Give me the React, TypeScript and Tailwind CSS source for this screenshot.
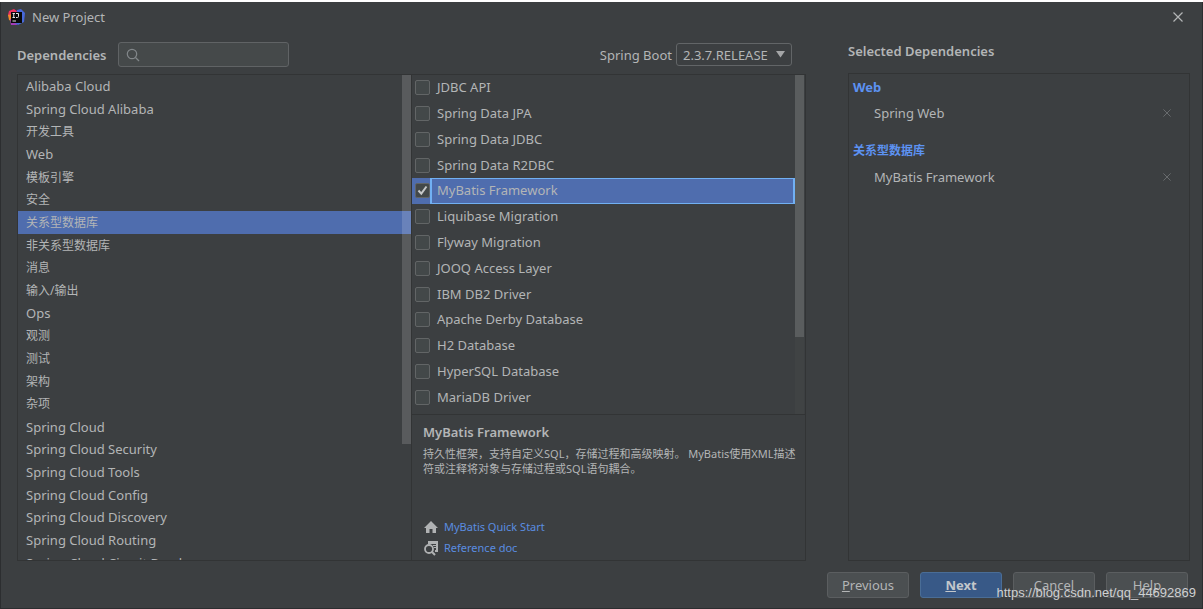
import { useState } from "react";

const categories = [
  "Alibaba Cloud",
  "Spring Cloud Alibaba",
  "开发工具",
  "Web",
  "模板引擎",
  "安全",
  "关系型数据库",
  "非关系型数据库",
  "消息",
  "输入/输出",
  "Ops",
  "观测",
  "测试",
  "架构",
  "杂项",
  "Spring Cloud",
  "Spring Cloud Security",
  "Spring Cloud Tools",
  "Spring Cloud Config",
  "Spring Cloud Discovery",
  "Spring Cloud Routing",
  "Spring Cloud Circuit Breaker",
];

const drivers = [
  "JDBC API",
  "Spring Data JPA",
  "Spring Data JDBC",
  "Spring Data R2DBC",
  "MyBatis Framework",
  "Liquibase Migration",
  "Flyway Migration",
  "JOOQ Access Layer",
  "IBM DB2 Driver",
  "Apache Derby Database",
  "H2 Database",
  "HyperSQL Database",
  "MariaDB Driver",
];

const selected = [
  { group: "Web", items: ["Spring Web"] },
  { group: "关系型数据库", items: ["MyBatis Framework"] },
];

const isChinese = (text: string) => /[\u4e00-\u9fff]/.test(text);

function Logo() {
  return (
    <svg width="18" height="17" viewBox="0 0 18 17" aria-hidden="true">
      <path d="M1 2 L6 0 L10 3 L6 12 L0 6 Z" fill="#f0315f" />
      <path d="M0 6 L4 5 L5 13 L1 11 Z" fill="#f48a2a" />
      <path d="M2 10 L8 11 L9 16 L3 16 Z" fill="#a23bb8" />
      <path d="M9 1 L13 0 L17 4 L16 13 L10 16 L7 14 Z" fill="#4768d8" />
      <rect x="3" y="3" width="11" height="11" fill="#080808" />
      <path d="M4.5 4.5 H7 M5.75 4.5 V8.5 M4.5 8.5 H7 M8 4.5 H10.5 V7.5 Q10.5 8.5 9.5 8.5 H8 M4.5 12 H8" fill="none" stroke="#e4e4e4" />
    </svg>
  );
}

function Cross({ size }: { size: number }) {
  return (
    <svg width={size} height={size} viewBox="0 0 10 10" fill="none" stroke="currentColor" strokeWidth="1.2" aria-hidden="true">
      <path d="M0.5 0.5 L9.5 9.5 M9.5 0.5 L0.5 9.5" />
    </svg>
  );
}

function DriverRow({ name, active }: { name: string; active: boolean }) {
  const [checked, setChecked] = useState(active);
  return (
    <li className={active ? "bg-[#4f6dae]" : ""}>
      <label className="flex h-full items-center">
        <span className="grid w-[18px] shrink-0 place-items-center pl-[3px]">
          <input
            type="checkbox"
            checked={checked}
            onChange={() => setChecked(!checked)}
            className="col-start-1 row-start-1 size-[15px] appearance-none rounded-[2px] border border-[#626566] bg-[#434849]"
          />
          {checked && (
            <svg width="11" height="11" viewBox="0 0 11 11" className="pointer-events-none col-start-1 row-start-1" fill="none" stroke="#c6c8c9" strokeWidth="2" aria-hidden="true">
              <path d="M1.5 5.5 L4.3 8.7 L9.5 1.5" />
            </svg>
          )}
        </span>
        <span className={`flex h-full flex-1 items-center border border-x-2 pb-px pl-[5px] ${active ? "border-[#71b0f3]" : "border-transparent"}`}>{name}</span>
      </label>
    </li>
  );
}

const buttonClass = "h-[26px] w-[82px] rounded-[3px] border border-[#5b5e60] bg-[#4b4f51]";

export default function App() {
  return (
    <div className="flex h-screen flex-col border-t-2 border-white bg-[#3c3f41] font-['Noto_Sans','Noto_Sans_CJK_SC',sans-serif] text-[13px] leading-5 text-[#b3b5b6]">
      <div className="flex min-h-0 flex-1 flex-col border border-t-0 border-[#2c2e30]">
        <header className="flex h-[30px] shrink-0 items-center pr-[19px] pl-[7px]">
          <Logo />
          <h1 className="ml-[6px] flex-1">New Project</h1>
          <button type="button" aria-label="Close">
            <Cross size={10} />
          </button>
        </header>

        <main className="flex min-h-0 flex-1 gap-[42px] pr-3 pl-4">
          <section className="flex min-w-0 flex-[789] flex-col">
            <div className="flex h-[42px] shrink-0 items-center pt-[3px] pr-[14px]">
              <label htmlFor="search" className="font-semibold">Dependencies</label>
              <div className="ml-3 flex h-[25px] w-[171px] items-center rounded-[3px] border border-[#606365] bg-[#45494a] px-[7px]">
                <svg width="14" height="14" viewBox="0 0 14 14" fill="none" stroke="#82878a" strokeWidth="1.2" aria-hidden="true">
                  <circle cx="6" cy="6" r="4.7" />
                  <path d="M9.5 9.5 L13 13" />
                </svg>
                <input id="search" type="text" className="min-w-0 flex-1 bg-transparent pl-1 outline-none" />
              </div>
              <label htmlFor="boot" className="ml-auto">Spring Boot</label>
              <div className="ml-1 grid h-[23px] w-[116px] items-center rounded-[3px] border border-[#626567]">
                <select id="boot" className="col-start-1 row-start-1 appearance-none bg-transparent pl-[6px] outline-none">
                  <option>2.3.7.RELEASE</option>
                </select>
                <svg width="9" height="7" viewBox="0 0 9 7" className="pointer-events-none col-start-1 row-start-1 mr-[6px] justify-self-end" fill="#a4a6a7" aria-hidden="true">
                  <path d="M0 0 H9 L4.5 6.5 Z" />
                </svg>
              </div>
            </div>

            <div className="flex min-h-0 flex-1 border border-[#323435]">
              <div className="grid min-w-0 flex-1 grid-cols-[1fr_9px] grid-rows-[minmax(0,1fr)] overflow-hidden">
                <ul className="col-span-2 col-start-1 row-start-1 grid h-[499px] auto-rows-fr">
                  {categories.map((name) => (
                    <li key={name} className={name === "关系型数据库" ? "bg-[#4f6dae]" : ""}>
                      <button type="button" className={`flex h-full w-full items-center pl-2 ${isChinese(name) ? "pt-px text-xs" : ""}`}>{name}</button>
                    </li>
                  ))}
                </ul>
                <div className="col-start-2 row-start-1 h-[76%] bg-white/15" />
              </div>

              <div className="flex min-w-0 flex-1 flex-col border-l border-[#323435]">
                <div className="flex h-[340px] shrink-0 border-b border-[#323435]">
                  <ul className="grid h-[335px] flex-1 auto-rows-fr">
                    {drivers.map((name) => (
                      <DriverRow key={name} name={name} active={name === "MyBatis Framework"} />
                    ))}
                  </ul>
                  <div className="mr-px w-[9px] bg-[#404344]">
                    <div className="h-[262px] bg-[#5a5d5e]" />
                  </div>
                </div>
                <article className="flex flex-1 flex-col pt-[7px] pr-2 pb-[2px] pl-[11px]">
                  <h2 className="font-semibold">MyBatis Framework</h2>
                  <p className="mt-1 text-[11px] leading-[15px]">
                    持久性框架，支持自定义SQL，存储过程和高级映射。 MyBatis使用XML描述符或注释将对象与存储过程或SQL语句耦合。
                  </p>
                  <div className="mt-auto text-[11px] text-[#5a8de0]">
                    <a href="#quick-start" className="flex h-[21px] items-center gap-[5px]">
                      <svg width="16" height="14" viewBox="0 0 16 14" fill="#b0b2b3" aria-hidden="true">
                        <path d="M8 1 L15 8 H13 V13 H9.5 V9 H6.5 V13 H3 V8 H1 Z" />
                      </svg>
                      MyBatis Quick Start
                    </a>
                    <a href="#reference" className="flex h-[21px] items-center gap-[5px]">
                      <svg width="16" height="16" viewBox="0 0 16 16" fill="none" stroke="#b0b2b3" aria-hidden="true">
                        <path d="M5 1 H15 V12 H12 V10 H13 V8 H11 V7 H13 V6 H10 V5 H13 V4 H5 Z" fill="#b0b2b3" stroke="none" />
                        <circle cx="6" cy="9" r="4" strokeWidth="1.8" />
                        <path d="M8.8 11.8 L12 15" strokeWidth="2" />
                      </svg>
                      Reference doc
                    </a>
                  </div>
                </article>
              </div>
            </div>
          </section>

          <section className="flex min-w-0 flex-[342] flex-col">
            <h2 className="flex h-[41px] shrink-0 items-center pb-1 font-semibold">Selected Dependencies</h2>
            <div className="flex-1 border border-[#323435] pt-[3px] pl-1">
              {selected.map(({ group, items }) => (
                <div key={group} className="mb-3">
                  <h3 className={`text-[#5c92f2] ${isChinese(group) ? "text-xs leading-5 font-bold" : "font-bold"}`}>{group}</h3>
                  <ul>
                    {items.map((item) => (
                      <li key={item} className="flex h-8 items-center justify-between pr-[18px] pl-[21px]">
                        {item}
                        <button type="button" aria-label={`Remove ${item}`} className="text-[#6b6e70]">
                          <Cross size={8} />
                        </button>
                      </li>
                    ))}
                  </ul>
                </div>
              ))}
            </div>
          </section>
        </main>

        <footer className="grid h-[47px] shrink-0 items-center pt-px pr-[14px]">
          <div className="col-start-1 row-start-1 flex justify-end gap-[11px]">
            <button type="button" className={buttonClass}><u>P</u>revious</button>
            <button type="button" className="h-[26px] w-[82px] rounded-[3px] border border-[#4a6d96] bg-[#385987] font-bold text-[#c3c7cb]"><u>N</u>ext</button>
            <button type="button" className={buttonClass}>Cancel</button>
            <button type="button" className={buttonClass}>Help</button>
          </div>
          <span className="pointer-events-none col-start-1 row-start-1 -mr-2 justify-self-end pt-4 font-['Liberation_Sans',sans-serif] text-[13px] text-[#cfd0d1]">
            https://blog.csdn.net/qq_44692869
          </span>
        </footer>
      </div>
    </div>
  );
}
